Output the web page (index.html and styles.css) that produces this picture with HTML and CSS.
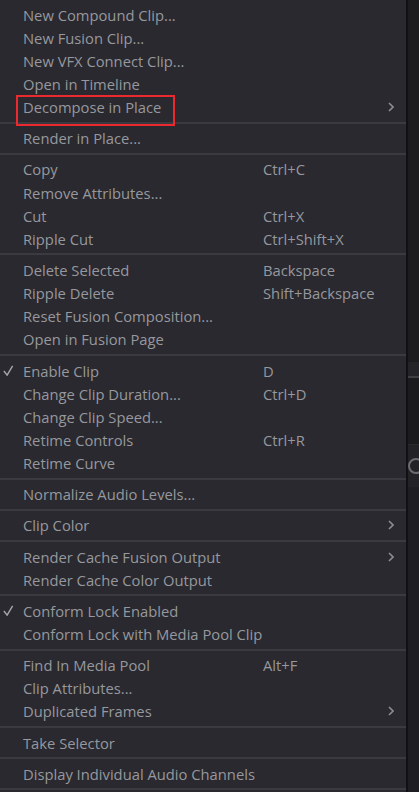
FILE: index.html
```html
<!doctype html>
<html lang="en">
<head>
    <meta charset="UTF-8">
    <meta name="viewport" content="width=device-width, initial-scale=1.0">
    <title>Clip context menu</title>
    <link rel="stylesheet" href="styles.css">
</head>
<body>
<div class="screen">
    <div class="menu">
        <div class="item"><span></span><span>New Compound Clip...</span></div>
        <div class="item"><span></span><span>New Fusion Clip...</span></div>
        <div class="item"><span></span><span>New VFX Connect Clip...</span></div>
        <div class="item"><span></span><span>Open in Timeline</span></div>
        <div class="item marked">
            <span></span><span>Decompose in Place</span><span></span>
            <svg class="arrow" viewBox="0 0 6 10"><polyline points="1,1 5,5 1,9"/></svg>
            <div class="highlight"></div>
        </div>
        <div class="sep"></div>
        <div class="item"><span></span><span>Render in Place...</span></div>
        <div class="sep"></div>
        <div class="item"><span></span><span>Copy</span><span class="key">Ctrl+C</span></div>
        <div class="item"><span></span><span>Remove Attributes...</span></div>
        <div class="item"><span></span><span>Cut</span><span class="key">Ctrl+X</span></div>
        <div class="item"><span></span><span>Ripple Cut</span><span class="key">Ctrl+Shift+X</span></div>
        <div class="sep"></div>
        <div class="item"><span></span><span>Delete Selected</span><span class="key">Backspace</span></div>
        <div class="item"><span></span><span>Ripple Delete</span><span class="key">Shift+Backspace</span></div>
        <div class="item"><span></span><span>Reset Fusion Composition...</span></div>
        <div class="item"><span></span><span>Open in Fusion Page</span></div>
        <div class="sep"></div>
        <div class="item">
            <svg class="check" viewBox="0 0 12 12"><polyline points="1,6.5 4.5,11 10.5,1"/></svg>
            <span>Enable Clip</span><span class="key">D</span>
        </div>
        <div class="item"><span></span><span>Change Clip Duration...</span><span class="key">Ctrl+D</span></div>
        <div class="item"><span></span><span>Change Clip Speed...</span></div>
        <div class="item"><span></span><span>Retime Controls</span><span class="key">Ctrl+R</span></div>
        <div class="item"><span></span><span>Retime Curve</span></div>
        <div class="sep"></div>
        <div class="item"><span></span><span>Normalize Audio Levels...</span></div>
        <div class="sep"></div>
        <div class="item">
            <span></span><span>Clip Color</span><span></span>
            <svg class="arrow" viewBox="0 0 6 10"><polyline points="1,1 5,5 1,9"/></svg>
        </div>
        <div class="sep"></div>
        <div class="item">
            <span></span><span>Render Cache Fusion Output</span><span></span>
            <svg class="arrow" viewBox="0 0 6 10"><polyline points="1,1 5,5 1,9"/></svg>
        </div>
        <div class="item"><span></span><span>Render Cache Color Output</span></div>
        <div class="sep"></div>
        <div class="item">
            <svg class="check" viewBox="0 0 12 12"><polyline points="1,6.5 4.5,11 10.5,1"/></svg>
            <span>Conform Lock Enabled</span>
        </div>
        <div class="item"><span></span><span>Conform Lock with Media Pool Clip</span></div>
        <div class="sep"></div>
        <div class="item"><span></span><span>Find In Media Pool</span><span class="key">Alt+F</span></div>
        <div class="item"><span></span><span>Clip Attributes...</span></div>
        <div class="item">
            <span></span><span>Duplicated Frames</span><span></span>
            <svg class="arrow" viewBox="0 0 6 10"><polyline points="1,1 5,5 1,9"/></svg>
        </div>
        <div class="sep"></div>
        <div class="item"><span></span><span>Take Selector</span></div>
        <div class="sep"></div>
        <div class="item"><span></span><span>Display Individual Audio Channels</span></div>
        <div class="sep"></div>
    </div>
    <div class="backdrop">
        <div class="band"></div>
        <div class="panel dark"></div>
        <div class="panel knob">
            <svg class="ring" viewBox="0 0 20 20"><circle cx="10" cy="10" r="7"/></svg>
        </div>
        <div class="panel rest"></div>
    </div>
</div>
</body>
</html>
```

FILE: styles.css
```css
body {
    margin: 0;
    background-color: #1c1c1f;
    font-family: "Open Sans", "Noto Sans", sans-serif;
    font-size: 14.75px;
    color: #97989e;
}
.screen {
    display: flex;
    height: 792px;
    overflow: hidden;
}
.menu {
    width: 406px;
    flex: none;
    background-color: #29292f;
    padding-top: 3px;
    border-right: 2px solid #111113;
}
.item {
    position: relative;
    display: grid;
    grid-template-columns: 23px 240px 1fr 24px;
    align-items: center;
    height: 23.15px;
    white-space: nowrap;
}
.key {
    color: #97989e;
}
.arrow {
    width: 6px;
    height: 10px;
    margin-left: 6px;
    fill: none;
    stroke: #8c8d93;
    stroke-width: 1.6;
}
.check {
    width: 11px;
    height: 11px;
    margin-left: 3px;
    fill: none;
    stroke: #a4a5ab;
    stroke-width: 1.6;
}
.highlight {
    position: absolute;
    left: 16px;
    top: -1px;
    width: 155px;
    height: 27px;
    border: 2px solid #ec2a2e;
}
.sep {
    height: 8px;
    display: flex;
    align-items: center;
}
.sep::before {
    content: "";
    display: block;
    width: 100%;
    height: 2px;
    background-color: #3a3a40;
}
.backdrop {
    flex: 1;
    display: flex;
    flex-direction: column;
}
.band {
    height: 376px;
    border-bottom: 2px solid #3e3e43;
    background: linear-gradient(#1c1c1f 0, #1c1c1f 362px, #242428 362px);
}
.panel.dark {
    height: 66px;
    background-color: #1b1b1e;
    border-bottom: 1px solid #2a2a2e;
}
.panel.knob {
    height: 42px;
    background-color: #232327;
    display: flex;
    align-items: center;
}
.ring {
    width: 20px;
    height: 20px;
    margin-left: -2px;
    fill: none;
    stroke: #6c6c72;
    stroke-width: 2;
}
.panel.rest {
    flex: 1;
    background-color: #1e1e22;
}
```
